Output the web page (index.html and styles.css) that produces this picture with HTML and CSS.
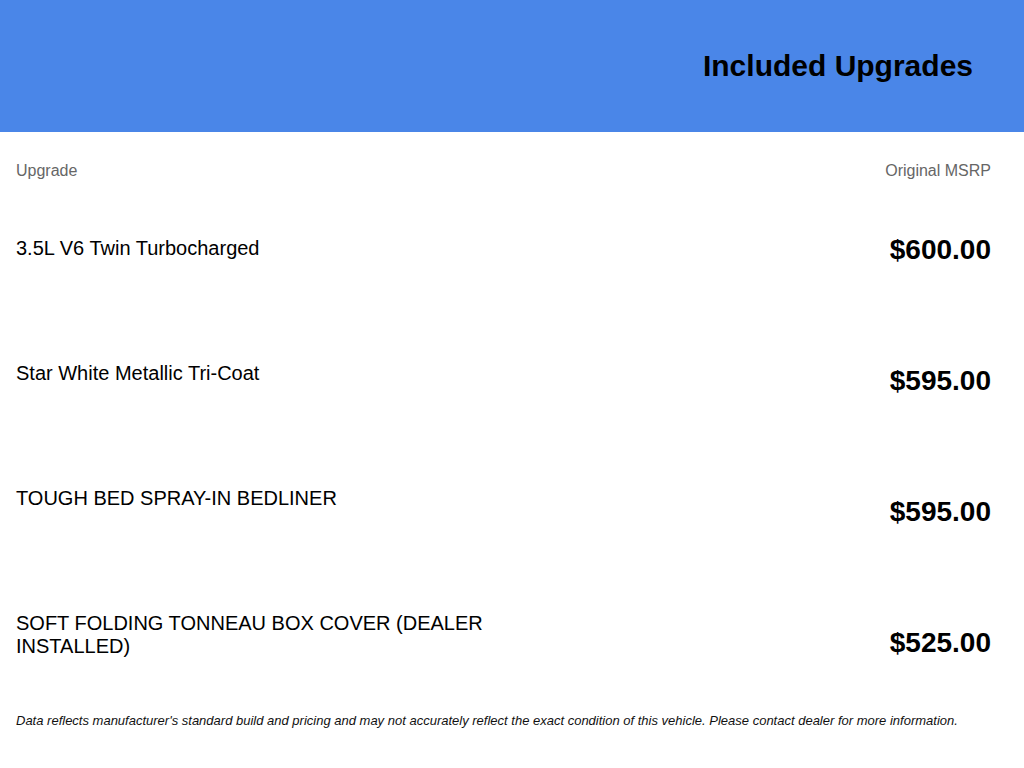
FILE: index.html
```html
<!DOCTYPE html>
<html lang="en">
<head>
<meta charset="utf-8">
<title>Included Upgrades</title>
<link rel="stylesheet" href="styles.css">
</head>
<body>
<header class="banner">
  <h1 class="banner-title">Included Upgrades</h1>
</header>
<main class="content">
  <div class="labels">
    <span>Upgrade</span>
    <span>Original MSRP</span>
  </div>
  <div class="columns">
    <ul class="names">
      <li>3.5L V6 Twin Turbocharged</li>
      <li>Star White Metallic Tri-Coat</li>
      <li>TOUGH BED SPRAY-IN BEDLINER</li>
      <li>SOFT FOLDING TONNEAU BOX COVER (DEALER INSTALLED)</li>
    </ul>
    <ul class="prices">
      <li>$600.00</li>
      <li>$595.00</li>
      <li>$595.00</li>
      <li>$525.00</li>
    </ul>
  </div>
  <p class="disclaimer">Data reflects manufacturer's standard build and pricing and may not accurately reflect the exact condition of this vehicle. Please contact dealer for more information.</p>
</main>
</body>
</html>
```
FILE: styles.css
```css
* { box-sizing: border-box; }
html, body { margin: 0; padding: 0; background: #fff; }
body {
  font-family: "Liberation Sans", Arial, sans-serif;
  color: #000;
}
.banner {
  height: 132px;
  background: #4a86e8;
  display: flex;
  align-items: center;
  justify-content: flex-end;
  padding-right: 51px;
}
.banner-title {
  margin: 0;
  font-size: 30px;
  font-weight: bold;
  line-height: 34px;
  color: #000;
}
.content {
  padding: 0 33px 0 16px;
}
.labels {
  display: flex;
  justify-content: space-between;
  margin-top: 30px;
  font-size: 16px;
  line-height: 18px;
  color: #666;
}
.columns {
  display: flex;
  justify-content: space-between;
  margin-top: 56px;
}
.names, .prices {
  list-style: none;
  margin: 0;
  padding: 0;
}
.names { width: 500px; }
.names li {
  font-size: 20px;
  line-height: 23px;
  padding-top: 1px;
  height: 125px;
}
.names li:last-child { height: auto; }
.prices { text-align: right; }
.prices li {
  font-size: 28px;
  font-weight: bold;
  line-height: 28px;
  height: 131px;
}
.prices li:last-child { height: auto; }
.disclaimer {
  margin: 55px 0 0;
  font-size: 13px;
  line-height: 15px;
  font-style: italic;
  color: #111;
}
```
